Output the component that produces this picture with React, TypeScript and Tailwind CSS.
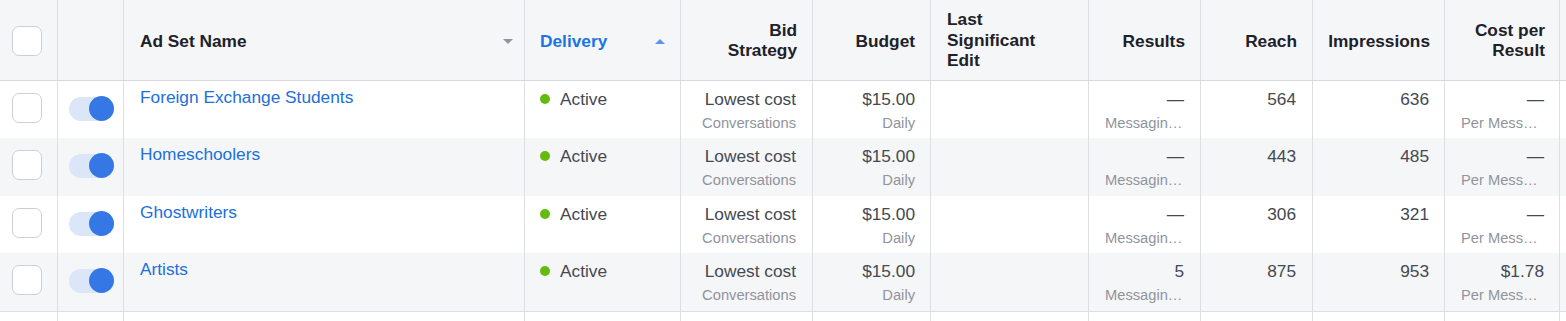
import React from 'react';

const GRID =
  'grid grid-cols-[58px_66px_401px_156px_132px_118px_158px_112px_112px_132px_115px_1fr]';

const CELL = 'border-r border-[#dddfe2]';

interface AdSet {
  name: string;
  reach: string;
  impressions: string;
  results: string;
  cost: string;
}

const rows: AdSet[] = [
  { name: 'Foreign Exchange Students', results: '—', reach: '564', impressions: '636', cost: '—' },
  { name: 'Homeschoolers', results: '—', reach: '443', impressions: '485', cost: '—' },
  { name: 'Ghostwriters', results: '—', reach: '306', impressions: '321', cost: '—' },
  { name: 'Artists', results: '5', reach: '875', impressions: '953', cost: '$1.78' },
];

function Checkbox() {
  return <div className="w-[30px] h-[30px] rounded-[7px] border border-[#ccd0d5] bg-white" />;
}

function Toggle() {
  return (
    <div className="relative w-[45px] h-[25px]">
      <div className="absolute left-0 top-[1px] w-[45px] h-[24px] rounded-full bg-[#dbe6f9]" />
      <div className="absolute right-0 top-0 w-[25px] h-[25px] rounded-full bg-[#3578e5]" />
    </div>
  );
}

function SortArrow({ up, color }: { up?: boolean; color: string }) {
  return (
    <svg width="10" height="5" viewBox="0 0 10 5" className="shrink-0">
      <path d={up ? 'M0 5 L5 0 L10 5 Z' : 'M0 0 L10 0 L5 5 Z'} fill={color} />
    </svg>
  );
}

function Header() {
  const th = 'text-[17.3px] leading-[20.5px] font-bold text-[#1d2129]';
  return (
    <div className={`${GRID} h-[81px] bg-[#f5f6f7] border-b border-[#d6d9dd]`}>
      <div className={`${CELL} flex items-center pl-[12px] pt-[2px]`}>
        <Checkbox />
      </div>
      <div className={CELL} />
      <div className={`${CELL} flex items-center justify-between pl-[16px] pr-[11px] pt-[2px]`}>
        <span className={th}>Ad Set Name</span>
        <SortArrow color="#90949c" />
      </div>
      <div className={`${CELL} flex items-center justify-between pl-[15px] pr-[15px] pt-[2px]`}>
        <span className="text-[17.3px] leading-[20.5px] font-bold text-[#1b74e4]">Delivery</span>
        <SortArrow up color="#5b93f0" />
      </div>
      <div className={`${CELL} flex items-center justify-end text-right pr-[15px]`}>
        <span className={th}>
          Bid
          <br />
          Strategy
        </span>
      </div>
      <div className={`${CELL} flex items-center justify-end pr-[15px] pt-[2px]`}>
        <span className={th}>Budget</span>
      </div>
      <div className={`${CELL} flex items-center pl-[16px]`}>
        <span className={th}>
          Last
          <br />
          Significant
          <br />
          Edit
        </span>
      </div>
      <div className={`${CELL} flex items-center justify-end pr-[15px] pt-[2px]`}>
        <span className={th}>Results</span>
      </div>
      <div className={`${CELL} flex items-center justify-end pr-[15px] pt-[2px]`}>
        <span className={th}>Reach</span>
      </div>
      <div className={`${CELL} flex items-center justify-end pr-[14px] pt-[2px]`}>
        <span className={th}>Impressions</span>
      </div>
      <div className={`${CELL} flex items-center justify-end text-right pr-[14px]`}>
        <span className={th}>
          Cost per
          <br />
          Result
        </span>
      </div>
      <div />
    </div>
  );
}

function Row({ row, index }: { row: AdSet; index: number }) {
  const bg = index % 2 === 1 ? 'bg-[#f5f6f7]' : 'bg-white';
  const h = index % 2 === 1 ? 'h-[58px]' : 'h-[57px]';
  const main = 'text-[17.3px] leading-[22px] text-[#444950]';
  const sub = 'text-[14.7px] leading-[27px] text-[#90949c]';
  return (
    <div className={`${GRID} ${h} ${bg}`}>
      <div className={`${CELL} pl-[12px] pt-[12px]`}>
        <Checkbox />
      </div>
      <div className={`${CELL} pl-[11px] pt-[15px]`}>
        <Toggle />
      </div>
      <div className={`${CELL} pl-[16px] pt-[5px]`}>
        <a className="text-[17.3px] leading-[22px] text-[#216fdb]">{row.name}</a>
      </div>
      <div className={`${CELL} pl-[15px] pt-[7px] flex items-start`}>
        <div className="flex items-center h-[22px] gap-[10px]">
          <span className="w-[10px] h-[10px] rounded-full bg-[#63bb0e]" />
          <span className={main}>Active</span>
        </div>
      </div>
      <div className={`${CELL} pr-[16px] pt-[7px] text-right`}>
        <div className={main}>Lowest cost</div>
        <div className={sub}>Conversations</div>
      </div>
      <div className={`${CELL} pr-[15px] pt-[7px] text-right`}>
        <div className={main}>$15.00</div>
        <div className={sub}>Daily</div>
      </div>
      <div className={CELL} />
      <div className={`${CELL} pl-[16px] pr-[16px] pt-[7px] text-right`}>
        <div className={main}>{row.results}</div>
        <div className={`${sub} text-left`}>Messagin…</div>
      </div>
      <div className={`${CELL} pr-[16px] pt-[7px] text-right`}>
        <div className={main}>{row.reach}</div>
      </div>
      <div className={`${CELL} pr-[15px] pt-[7px] text-right`}>
        <div className={main}>{row.impressions}</div>
      </div>
      <div className={`${CELL} pl-[16px] pr-[15px] pt-[7px] text-right`}>
        <div className={main}>{row.cost}</div>
        <div className={`${sub} text-left`}>Per Mess…</div>
      </div>
      <div />
    </div>
  );
}

export default function App() {
  return (
    <div className="w-[1566px] h-[321px] overflow-hidden bg-white font-['Liberation_Sans',Arial,sans-serif]">
      <Header />
      {rows.map((r, i) => (
        <Row key={r.name} row={r} index={i} />
      ))}
      <div className={`${GRID} h-[20px] bg-white border-t border-[#dddfe2]`}>
        {Array.from({ length: 11 }).map((_, i) => (
          <div key={i} className={CELL} />
        ))}
        <div />
      </div>
    </div>
  );
}
